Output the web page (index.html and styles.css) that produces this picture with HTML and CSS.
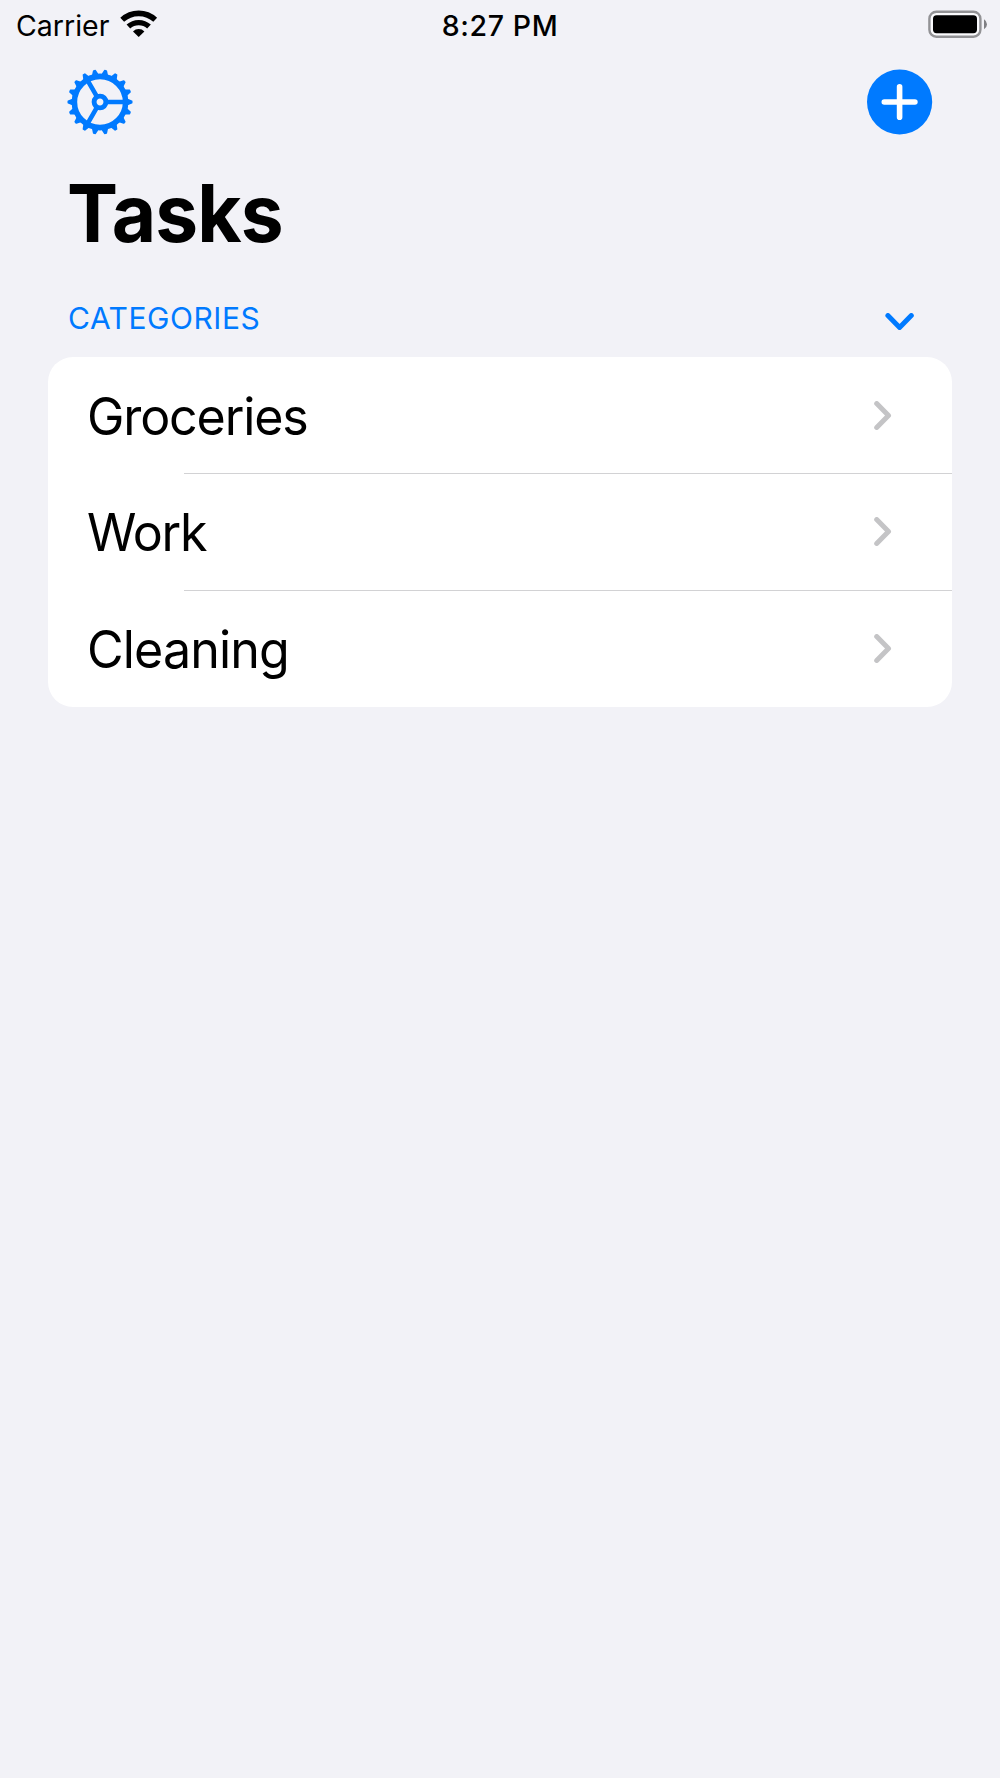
FILE: index.html
```html
<!DOCTYPE html>
<html lang="en">
<head>
<meta charset="utf-8">
<title>Tasks</title>
<link rel="stylesheet" href="styles.css">
</head>
<body>
<svg width="0" height="0" class="defs" aria-hidden="true">
  <defs>
    <path id="tooth" d="M26 -3 L28 -2.3 L31.7 -.8 L31.7 .8 L28 2.3 L26 3 Z"/>
    <g id="teeth3"><use href="#tooth"/><use href="#tooth" transform="rotate(20)"/><use href="#tooth" transform="rotate(40)"/></g>
    <path id="chevron" d="M2.7 2.6 L14.5 14.5 L2.7 26.4"/>
  </defs>
</svg>
<header class="status">
  <div class="status-left">
    <span class="carrier">Carrier</span>
    <svg class="wifi" width="38" height="28" viewBox="0 0 38 28">
      <path d="M2.2 9.8 A24.3 24.3 0 0 1 35.2 9.8" stroke-width="5.6"/>
      <path d="M8.4 16.6 A15.2 15.2 0 0 1 29 16.6" stroke-width="5.4"/>
      <path class="dot" d="M13 21.4 A8.2 8.2 0 0 1 24.4 21.4 L18.7 27 Z"/>
    </svg>
  </div>
  <time class="clock">8:27 PM</time>
  <div class="status-right">
    <svg width="60" height="30" viewBox="0 0 60 30">
      <rect x="1.4" y="1.7" width="51" height="25" rx="7" fill="#fff" fill-opacity=".6" stroke="#929295" stroke-width="2.4"/>
      <rect x="5" y="5.2" width="44" height="18" rx="3.6"/>
      <path d="M56 9.2 Q59 11 59 14.2 Q59 17.4 56 19.2 Z" fill="#7f7f83"/>
    </svg>
  </div>
</header>
<nav class="toolbar">
  <svg class="gear" width="66" height="66" viewBox="-33 -33 66 66">
    <circle r="25.6" stroke-width="5.6"/>
    <circle r="5.9" stroke-width="4.9"/>
    <path d="M7 0H24 M-3.5 -6.06 L-12 -20.8 M-3.5 6.06 L-12 20.8" stroke-width="4.6"/>
    <g class="teeth">
      <use href="#teeth3"/><use href="#teeth3" transform="rotate(60)"/><use href="#teeth3" transform="rotate(120)"/>
      <use href="#teeth3" transform="rotate(180)"/><use href="#teeth3" transform="rotate(240)"/><use href="#teeth3" transform="rotate(300)"/>
    </g>
  </svg>
  <svg class="add" width="66" height="66" viewBox="-33 -33 66 66">
    <circle cx="-.4" r="32.6"/>
    <path d="M-15.7 0H14.9M-.4 -15.3V15.3"/>
  </svg>
</nav>
<main>
  <h1>Tasks</h1>
  <div class="section-head">
    <h2>CATEGORIES</h2>
    <svg width="30" height="18" viewBox="0 0 30 18"><path d="M2.9 2.6 L14.6 14.4 L26.3 2.6"/></svg>
  </div>
  <ul class="list">
    <li><span class="groceries">Groceries</span><svg width="18" height="29" viewBox="0 0 18 29"><use href="#chevron"/></svg></li>
    <li><span class="work">Work</span><svg width="18" height="29" viewBox="0 0 18 29"><use href="#chevron"/></svg></li>
    <li><span class="cleaning">Cleaning</span><svg width="18" height="29" viewBox="0 0 18 29"><use href="#chevron"/></svg></li>
  </ul>
</main>
</body>
</html>
```
FILE: styles.css
```css
* { box-sizing: border-box; margin: 0; padding: 0; }
html { background: #f2f2f7; }
body {
  min-height: 1778px;
  display: flex;
  flex-direction: column;
  font-family: Inter, "Liberation Sans", sans-serif;
  color: #000;
}
svg { display: block; flex: none; }
.defs { width: 0; height: 0; display: none; }
.status {
  height: 50px;
  padding: 0 12px 0 12px;
  display: grid;
  grid-template-columns: 1fr auto 1fr;
  font-size: 28.5px;
  line-height: 52px;
}
.status-left { display: flex; padding-left: 4px; }
.carrier { width: 104px; white-space: nowrap; }
.wifi { margin-top: 10px; fill: none; stroke: #000; }
.wifi .dot { fill: #000; stroke: none; }
.clock { font-weight: 500; letter-spacing: .6px; }
.status-right { display: flex; justify-content: flex-end; padding-top: 10px; }
.toolbar {
  height: 104px;
  padding: 19px 67px 0;
  display: flex;
  justify-content: space-between;
}
.gear { fill: none; stroke: #007aff; }
.teeth { fill: #007aff; stroke-width: 1.6; stroke-linejoin: round; }
.add circle { fill: #007aff; }
.add path { stroke: #fff; stroke-width: 5.6; stroke-linecap: round; }
h1 {
  height: 120px;
  margin-left: 67px;
  font-size: 80px;
  line-height: 118px;
  font-weight: 700;
  letter-spacing: -.9px;
  transform: scaleX(.957);
  transform-origin: left;
}
.section-head {
  height: 83px;
  padding: 0 85px 0 68px;
  display: flex;
  justify-content: space-between;
}
h2 { color: #007aff; font-size: 30px; font-weight: 400; line-height: 88px; letter-spacing: .55px; }
.section-head svg { margin-top: 39px; fill: none; stroke: #007aff; stroke-width: 5; stroke-linecap: round; stroke-linejoin: round; }
.list {
  margin: 0 48.4px;
  list-style: none;
  background: #fff;
  border-radius: 25px;
  overflow: hidden;
}
.list li {
  height: 117px;
  padding: 0 60px 0 38.5px;
  display: flex;
  align-items: center;
  justify-content: space-between;
  font-size: 52px;
}
.list li:first-child { height: 116px; }
.list li + li { background: linear-gradient(#d2d2d4, #d2d2d4) 135.5px 0 / 100% 1px no-repeat; }
.list span { padding-top: 2px; transform: scaleX(.965); transform-origin: left; }
.list svg { fill: none; stroke: #c4c4c6; stroke-width: 5; stroke-linecap: round; stroke-linejoin: round; }
.groceries { letter-spacing: -1.2px; }
.work { letter-spacing: -1.3px; }
.cleaning { letter-spacing: -.9px; }
```
